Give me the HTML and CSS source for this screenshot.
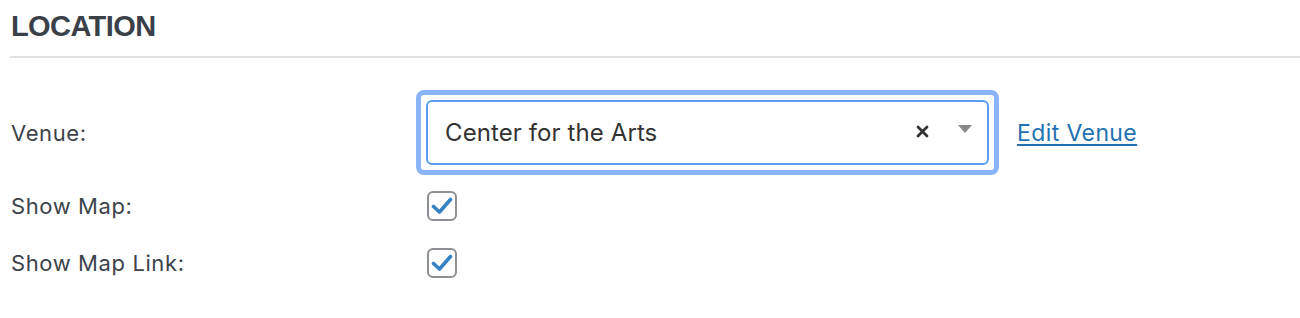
FILE: index.html
```html
<!DOCTYPE html>
<html>
<head>
<meta charset="utf-8">
<link rel="stylesheet" href="styles.css">
</head>
<body>
<div class="panel">
  <h2 class="section-title">LOCATION</h2>
  <div class="form">
    <div class="row row-venue">
      <div class="label">Venue:</div>
      <div class="field">
        <div class="focus-ring">
          <div class="select">
            <span class="select-value">Center for the Arts</span>
            <span class="select-clear"><svg width="13" height="13" viewBox="0 0 13 13"><path d="M2 2 L11 11 M11 2 L2 11" stroke="#333" stroke-width="2.8" stroke-linecap="round"/></svg></span>
            <span class="select-arrow"></span>
          </div>
        </div>
        <a class="edit-link" href="#">Edit Venue</a>
      </div>
    </div>
    <div class="row row-check first-check">
      <div class="label">Show Map:</div>
      <div class="field">
        <span class="checkbox">
          <svg width="22" height="18" viewBox="0 0 22 18"><path d="M2.5 9.5 L8.5 15 L19.5 2.5" fill="none" stroke="#3582c4" stroke-width="3.6" stroke-linecap="round" stroke-linejoin="round"/></svg>
        </span>
      </div>
    </div>
    <div class="row row-check">
      <div class="label">Show Map Link:</div>
      <div class="field">
        <span class="checkbox">
          <svg width="22" height="18" viewBox="0 0 22 18"><path d="M2.5 9.5 L8.5 15 L19.5 2.5" fill="none" stroke="#3582c4" stroke-width="3.6" stroke-linecap="round" stroke-linejoin="round"/></svg>
        </span>
      </div>
    </div>
  </div>
</div>
</body>
</html>
```
FILE: styles.css
```css
html, body {
  margin: 0;
  padding: 0;
  background: #fff;
}
body {
  font-family: "Inter", "Liberation Sans", sans-serif;
  color: #3c434a;
}
.panel {
  padding-left: 10px;
}
.section-title {
  margin: 0;
  padding: 9px 0 0 1px;
  font-family: "Liberation Sans", Arial, sans-serif;
  font-weight: bold;
  font-size: 29px;
  line-height: 34px;
  letter-spacing: -0.6px;
  color: #3a4048;
  height: 47px;
  border-bottom: 2px solid #e0e0e0;
}
.form {
  padding-left: 1px;
  padding-top: 32px;
}
.row {
  display: flex;
  align-items: center;
}
.label {
  width: 405px;
  flex: none;
  font-size: 22px;
  letter-spacing: 0.6px;
  color: #3c434a;
}
.field {
  display: flex;
  align-items: center;
}
.focus-ring {
  width: 563px;
  height: 65px;
  border: 5px solid #8ab4f8;
  border-radius: 8px;
  padding: 5px;
  box-sizing: content-box;
  display: flex;
}
.select {
  flex: 1;
  border: 2px solid #5b9cf0;
  border-radius: 6px;
  display: flex;
  align-items: center;
  padding: 0 15px 0 17px;
}
.select-value {
  flex: 1;
  font-size: 24px;
  letter-spacing: 0.1px;
  color: #333;
  padding-bottom: 1px;
}
.select-clear {
  display: flex;
  margin-right: 29px;
  margin-top: -2px;
}
.select-arrow {
  width: 0;
  height: 0;
  border-left: 7px solid transparent;
  border-right: 7px solid transparent;
  border-top: 8px solid #888;
  margin-top: -7px;
}
.edit-link {
  margin-left: 18px;
  font-size: 23px;
  letter-spacing: 0.4px;
  color: #2271b1;
  text-decoration: underline;
  text-underline-offset: 3px;
}
.row-check {
  height: 30px;
}
.first-check {
  margin-top: 16px;
}
.row-check + .row-check {
  margin-top: 27px;
}
.checkbox {
  margin-left: 11px;
  width: 26px;
  height: 26px;
  border: 2px solid #8c8f94;
  border-radius: 6px;
  display: flex;
  align-items: center;
  justify-content: center;
}
.checkbox svg {
  display: block;
}
```
